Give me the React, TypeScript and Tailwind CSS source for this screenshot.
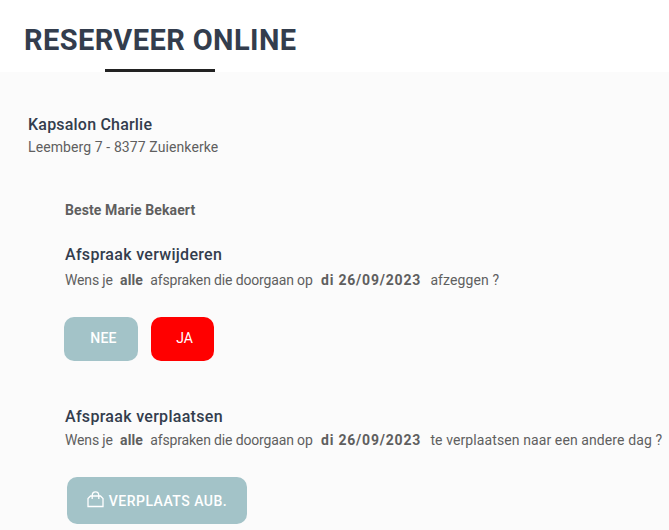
import * as React from "react";

function BagIcon() {
  return (
    <svg width="17" height="17" viewBox="0 0 17 17" fill="none" stroke="currentColor" strokeWidth="1.3" className="mb-[3px] shrink-0">
      <path d="M1 15.500 V7.500 L3.500 5 H13.500 L16 7.500 V15.500 Z" />
      <path d="M5.200 8 V4.500 C5.200 2 6.700 0.800 8.500 0.800 C10.300 0.800 11.800 2 11.800 4.500 V8" />
    </svg>
  );
}

export default function App() {
  return (
    <div className="h-[530px] overflow-hidden bg-[#fbfbfb] font-['Roboto',sans-serif] text-[#5f5f5f]">
      <header className="h-[72px] bg-white pl-6 pt-[22px]">
        <h1 className="text-[29px] font-bold leading-9 tracking-[0.4px] text-[#333d4d]">RESERVEER ONLINE</h1>
        <div className="ml-[81px] mt-[11px] h-[3px] w-[110px] bg-[#222222]" />
      </header>

      <main>
        <section className="pl-7 pt-[43px]">
          <h2 className="text-[16px] font-medium leading-5 tracking-[0.2px] text-[#333d4d]">Kapsalon Charlie</h2>
          <p className="mt-[2px] text-[14px] leading-5 tracking-[0.1px]">Leemberg 7 - 8377 Zuienkerke</p>
        </section>

        <section className="pl-[65px] pt-[44px]">
          <p className="text-[14px] font-bold leading-[18px] tracking-[0.1px]">Beste Marie Bekaert</p>

          <h3 className="mt-[26px] text-[16px] font-medium leading-5 tracking-[0.3px] text-[#333d4d]">Afspraak verwijderen</h3>
          <p className="mt-[5px] text-[14px] leading-5 tracking-[-0.15px]">
            Wens je <b className="mx-1 tracking-[0.1px]">alle</b> afspraken die doorgaan op <b className="ml-[5px] mr-[6px] tracking-[0.8px]">di 26/09/2023</b> <span className="tracking-[0.1px]">afzeggen ?</span>
          </p>

          <div className="ml-[-1px] mt-[27px] flex gap-[13px]">
            <button type="button" className="h-11 w-[74px] rounded-[10px] bg-[#a3c3c8] pb-[3px] pl-[5px] text-sm font-medium tracking-[0.2px] text-white">NEE</button>
            <button type="button" className="h-11 w-[63px] rounded-[10px] bg-[#ff0000] pb-[3px] pl-[4px] text-sm text-white">JA</button>
          </div>

          <h3 className="mt-[46px] text-[16px] font-medium leading-5 tracking-[0.3px] text-[#333d4d]">Afspraak verplaatsen</h3>
          <p className="mt-[3px] whitespace-nowrap text-[14px] leading-5 tracking-[-0.15px]">
            Wens je <b className="mx-1 tracking-[0.1px]">alle</b> afspraken die doorgaan op <b className="ml-[5px] mr-[6px] tracking-[0.8px]">di 26/09/2023</b> <span className="tracking-[0.1px]">te verplaatsen naar een andere dag ?</span>
          </p>

          <button type="button" className="ml-[2px] mt-[27px] flex h-[47px] w-[180px] items-center justify-center gap-[5px] rounded-[10px] bg-[#a3c3c8] text-sm font-medium tracking-[0.5px] text-white">
            <BagIcon />
            VERPLAATS AUB.
          </button>
        </section>
      </main>
    </div>
  );
}
